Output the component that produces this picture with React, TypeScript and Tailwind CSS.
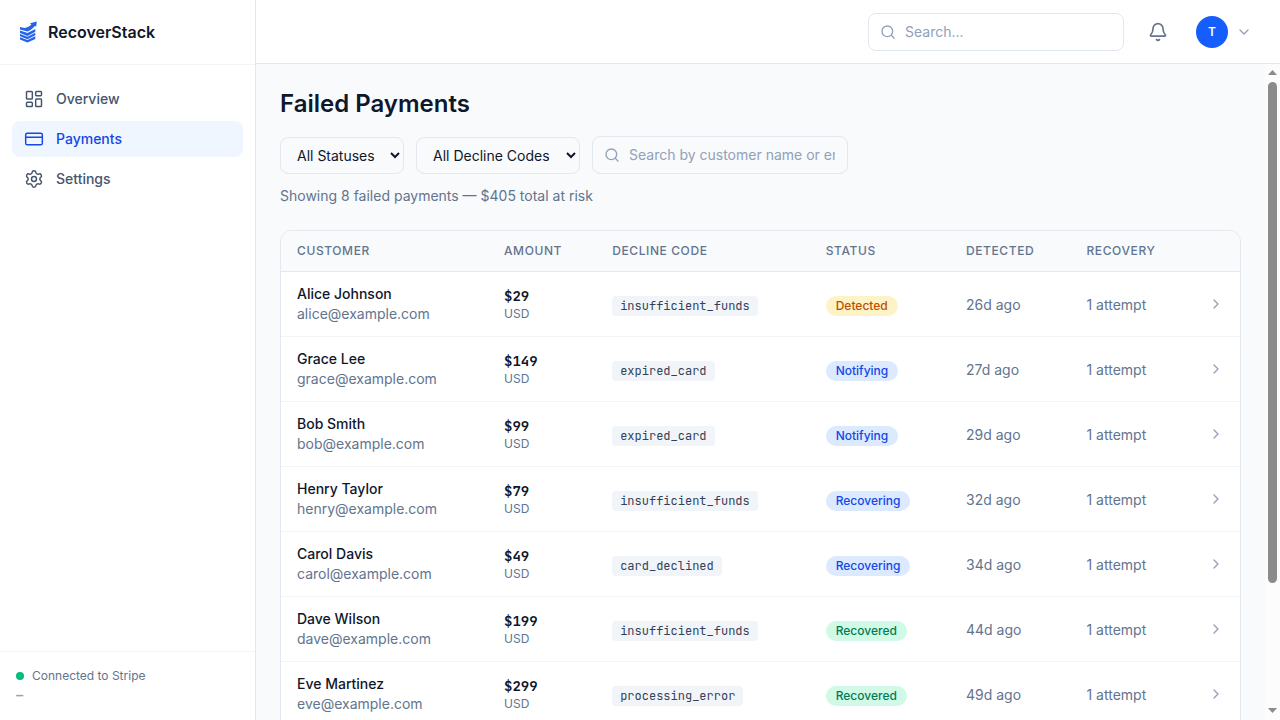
import React from "react";
import { Bell, ChevronDown, ChevronRight, CreditCard, LayoutDashboard, Search, Settings } from "lucide-react";

type Status = "Detected" | "Notifying" | "Recovering" | "Recovered";

interface Payment {
  name: string;
  email: string;
  amount: string;
  code: string;
  status: Status;
  detected: string;
}

const payments: Payment[] = [
  { name: "Alice Johnson", email: "alice@example.com", amount: "$29", code: "insufficient_funds", status: "Detected", detected: "26d ago" },
  { name: "Grace Lee", email: "grace@example.com", amount: "$149", code: "expired_card", status: "Notifying", detected: "27d ago" },
  { name: "Bob Smith", email: "bob@example.com", amount: "$99", code: "expired_card", status: "Notifying", detected: "29d ago" },
  { name: "Henry Taylor", email: "henry@example.com", amount: "$79", code: "insufficient_funds", status: "Recovering", detected: "32d ago" },
  { name: "Carol Davis", email: "carol@example.com", amount: "$49", code: "card_declined", status: "Recovering", detected: "34d ago" },
  { name: "Dave Wilson", email: "dave@example.com", amount: "$199", code: "insufficient_funds", status: "Recovered", detected: "44d ago" },
  { name: "Eve Martinez", email: "eve@example.com", amount: "$299", code: "processing_error", status: "Recovered", detected: "49d ago" },
];

const badge: Record<Status, string> = {
  Detected: "bg-amber-100 text-amber-700",
  Notifying: "bg-blue-100 text-blue-700",
  Recovering: "bg-blue-100 text-blue-700",
  Recovered: "bg-emerald-100 text-emerald-700",
};

const navItems = [
  { label: "Overview", Icon: LayoutDashboard, active: false },
  { label: "Payments", Icon: CreditCard, active: true },
  { label: "Settings", Icon: Settings, active: false },
];

function Logo() {
  return (
    <svg viewBox="0 0 24 24" className="size-6" fill="#2563eb">
      <path d="M4 7 8.5 8C11.5 7.4 13.6 6.2 15.4 4.4L14 3.2 20.8 1.6 20.2 6.4 18.8 6C16.6 9 13.8 10.8 11.5 11.6L4 9.6Z" />
      <path d="M4 10.5 11.5 13 19.3 9V11.7L11.5 15.9 4 13Z" />
      <path d="M4 13.9 11.5 16.7 19.3 12.7V15.3L11.5 19.2 4 16.3Z" />
      <path d="M4 17.2 11.5 20 19.3 16.2V18.9L11.5 22.4 4 19.6Z" />
    </svg>
  );
}

function SearchField({ placeholder }: { placeholder: string }) {
  return (
    <div className="relative w-64">
      <Search className="absolute top-1/2 left-3 size-4 -translate-y-1/2 text-slate-400" strokeWidth={2} />
      <input
        type="text"
        placeholder={placeholder}
        className="block h-[38px] w-full rounded-lg border border-slate-200 bg-transparent py-2 pr-3 pl-9 text-sm outline-none placeholder:text-slate-400"
      />
    </div>
  );
}

function ScrollBar() {
  return (
    <div className="flex w-[15px] shrink-0 flex-col items-center bg-[#fcfcfc] pt-[6px] pb-[7px]">
      <svg viewBox="0 0 9 5" className="h-[5px] w-[9px]" fill="#8b8b8b">
        <path d="M0 5 4.5 0 9 5Z" />
      </svg>
      <div className="mt-[7px] h-[501px] w-[9px] rounded-full bg-[#8b8b8b]" />
      <svg viewBox="0 0 9 5" className="mt-auto h-[5px] w-[9px]" fill="#8b8b8b">
        <path d="M0 0 4.5 5 9 0Z" />
      </svg>
    </div>
  );
}

export default function App() {
  return (
    <div className="flex h-screen overflow-hidden bg-slate-50 font-['Inter',sans-serif] text-slate-900">
      <aside className="flex w-64 shrink-0 flex-col border-r border-slate-200 bg-white">
        <div className="flex h-[65px] items-center gap-2 border-b border-slate-100 px-4">
          <Logo />
          <span className="text-base font-semibold">RecoverStack</span>
        </div>
        <nav className="flex flex-1 flex-col gap-1 px-3 py-4">
          {navItems.map(({ label, Icon, active }) => (
            <a
              key={label}
              className={
                active
                  ? "flex h-9 items-center gap-3 rounded-lg bg-blue-50 px-3 text-sm font-medium text-blue-700"
                  : "flex h-9 items-center gap-3 rounded-lg px-3 text-sm font-medium text-slate-600"
              }
            >
              <Icon className="size-5" strokeWidth={1.75} />
              {label}
            </a>
          ))}
        </nav>
        <div className="border-t border-slate-100 p-4 text-xs">
          <div className="flex items-center gap-2 text-slate-500">
            <span className="size-2 rounded-full bg-emerald-500" />
            Connected to Stripe
          </div>
          <p className="mt-1 font-['JetBrains_Mono','Liberation_Mono',monospace] font-bold text-slate-400">—</p>
        </div>
      </aside>

      <div className="flex min-w-0 flex-1 flex-col">
        <header className="flex h-16 shrink-0 items-center justify-end border-b border-slate-200 bg-white pr-7">
          <SearchField placeholder="Search..." />
          <button className="ml-4 flex size-9 items-center justify-center text-slate-500">
            <Bell className="size-5" strokeWidth={2} />
          </button>
          <button className="ml-5 flex items-center gap-2">
            <span className="flex size-8 items-center justify-center rounded-full bg-blue-600 text-xs font-semibold text-white">T</span>
            <ChevronDown className="size-4 text-slate-400" />
          </button>
        </header>

        <div className="flex min-h-0 flex-1">
          <main className="min-w-0 flex-1 overflow-hidden px-6 pt-6">
            <h1 className="text-2xl font-semibold">Failed Payments</h1>
            <div className="mt-[15.5px] flex items-end gap-3">
              <select className="h-[37px] w-[124px] rounded-lg border border-slate-200 px-3 py-2 text-sm">
                <option>All Statuses</option>
              </select>
              <select className="h-[37px] w-[164px] rounded-lg border border-slate-200 px-3 py-2 text-sm">
                <option>All Decline Codes</option>
              </select>
              <div className="pb-[0.5px]">
                <SearchField placeholder="Search by customer name or email..." />
              </div>
            </div>
            <p className="mt-3 text-sm text-slate-500">Showing 8 failed payments — $405 total at risk</p>

            <div className="mt-6 overflow-hidden rounded-t-xl border border-slate-200 bg-white">
              <table className="w-full table-fixed text-left">
                <colgroup>
                  <col className="w-[207px]" />
                  <col className="w-[108.15px]" />
                  <col className="w-[213.55px]" />
                  <col className="w-[140.3px]" />
                  <col className="w-[120.5px]" />
                  <col />
                  <col className="w-12" />
                </colgroup>
                <thead>
                  <tr className="border-b border-slate-200 bg-slate-50 text-xs tracking-wider text-slate-500 uppercase">
                    {["Customer", "Amount", "Decline Code", "Status", "Detected", "Recovery", ""].map((title) => (
                      <th key={title} className="px-4 py-3 font-medium">{title}</th>
                    ))}
                  </tr>
                </thead>
                <tbody>
                  {payments.map((p) => (
                    <tr key={p.email} className="h-[65px] border-b border-slate-100 text-sm">
                      <td className="px-4">
                        <div className="font-medium">{p.name}</div>
                        <div className="text-slate-500">{p.email}</div>
                      </td>
                      <td className="px-4">
                        <div className="font-['JetBrains_Mono','Liberation_Mono',monospace] font-bold">{p.amount}</div>
                        <div className="text-xs text-slate-500">USD</div>
                      </td>
                      <td className="px-4 pt-0.5">
                        <code className="rounded bg-slate-100 px-2 py-0.5 font-['JetBrains_Mono','Liberation_Mono',monospace] text-xs text-slate-700">{p.code}</code>
                      </td>
                      <td className="px-4 pt-0.5">
                        <span className={`inline-flex rounded-full px-2.5 py-0.5 text-xs font-medium ${badge[p.status]}`}>{p.status}</span>
                      </td>
                      <td className="px-4 pt-0.5 text-slate-500">{p.detected}</td>
                      <td className="px-4 pt-0.5 text-slate-500">1 attempt</td>
                      <td className="px-4">
                        <ChevronRight className="size-4 text-slate-400" />
                      </td>
                    </tr>
                  ))}
                </tbody>
              </table>
            </div>
          </main>
          <ScrollBar />
        </div>
      </div>
    </div>
  );
}
